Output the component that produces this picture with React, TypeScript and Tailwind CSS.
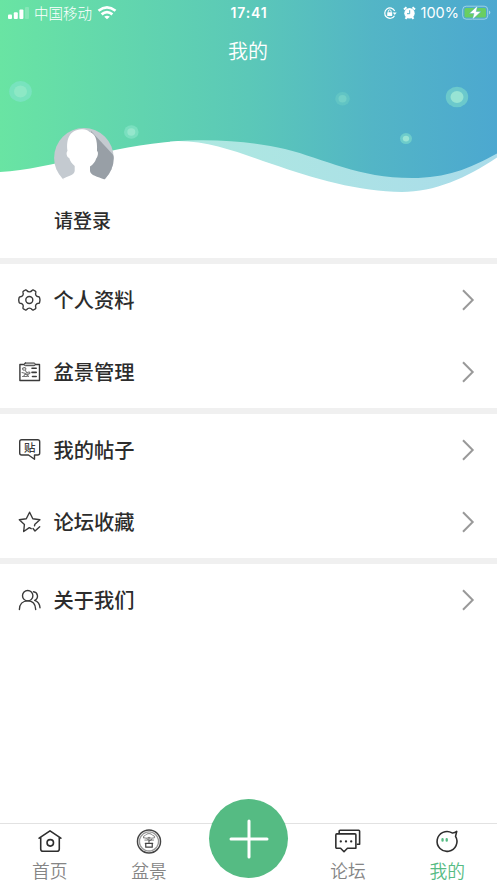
import type { ReactNode } from "react";

const rowIcon = {
  className: "block shrink-0",
  width: 24,
  height: 24,
  viewBox: "0 0 24 24",
  fill: "none",
  stroke: "#3a3a3a",
  strokeWidth: 1.4,
  strokeLinecap: "round" as const,
  strokeLinejoin: "round" as const,
};

const GearIcon = () => (
  <svg {...rowIcon}>
    <path d="M8.400 2Q9.300 1.700 9.800 2.500C11 4.300 13.800 4.300 15 2.500Q15.500 1.700 16.400 2L18.300 3.100Q19.100 3.600 18.800 4.500C17.900 6.700 19.300 8.600 21.500 8.700Q22.500 8.800 22.600 9.700L23 12L22.600 14.300Q22.500 15.200 21.500 15.300C19.300 15.400 17.900 17.300 18.800 19.500Q19.100 20.400 18.300 20.900L16.400 22Q15.500 22.300 15 21.500C13.800 19.700 11 19.700 9.800 21.500Q9.300 22.300 8.400 22L6.500 20.900Q5.700 20.400 6 19.500C6.900 17.300 5.500 15.400 3.300 15.300Q2.300 15.200 2.100 14.300L1.700 12L2.100 9.700Q2.300 8.800 3.300 8.700C5.500 8.600 6.900 6.700 6 4.500Q5.700 3.600 6.500 3.100Z" />
    <circle cx="12.300" cy="12" r="3.500" />
  </svg>
);

const BoardIcon = () => (
  <svg {...rowIcon}>
    <path d="M7 4.500H2.900V20.500H22.500V4.500H18.300" />
    <rect x="7.300" y="3" width="10.800" height="2.700" rx="1" fill="#ccc" strokeWidth="1" />
    <path d="M15 8.200h4.200M15 12.400h4.200M15.500 16.500h3.700" strokeWidth="1.600" />
    <path
      d="M5.500 8.500q2.500-2 3.500 .5q-2 2.500-3.500 0M8 10l2 3q2.500-2 3 0q-2.500 2.500-5 1M5 12.500l3.500 1l-2 3M9 14l2.500 2.500M5.500 16.500h4.500"
      stroke="#777"
      strokeWidth="1.100"
    />
  </svg>
);

const PostIcon = () => (
  <svg {...rowIcon}>
    <path d="M4.700 1.700H20.700Q22.700 1.700 22.700 3.700V15Q22.700 17 20.700 17H17.500V21.300L11.500 17H4.700Q2.700 17 2.700 15V3.700Q2.700 1.700 4.700 1.700Z" />
    <text
      x="12.800"
      y="13.500"
      textAnchor="middle"
      className="fill-[#3a3a3a] stroke-none text-[11.500px] font-medium"
    >
      贴
    </text>
  </svg>
);

const StarIcon = () => (
  <svg {...rowIcon}>
    <path d="M14.200 18.700L12.300 17.600L6.700 21.500L7.400 14.500L2.300 9.700L9.300 8.700L12.600 2.200L15.800 8.700L22.900 9.800L17.900 14.200L17.500 15.700" />
    <path d="M16 18.500L18 21L22.700 16.700" />
  </svg>
);

const PeopleIcon = () => (
  <svg {...rowIcon}>
    <circle cx="10.700" cy="7.700" r="5.200" />
    <path d="M2.400 21.500C2.500 16.500 5.500 12.900 10.700 12.900S18.500 16.500 18.700 21.500" />
    <path d="M16.500 3.800C20.700 4.200 22.300 9.800 17.700 12.300C21 13.500 22.800 16.200 23 19.700" />
  </svg>
);

const tabIcon = {
  className: "block",
  width: 28,
  height: 28,
  viewBox: "0 0 28 28",
  fill: "none",
  stroke: "#2e2e2e",
  strokeWidth: 1.7,
  strokeLinecap: "round" as const,
  strokeLinejoin: "round" as const,
};

const HomeIcon = () => (
  <svg {...tabIcon}>
    <path d="M2.300 11L14 3L25.700 11M4 10V22.500Q4 25 6.500 25H21.500Q24 25 24 22.500V10" />
    <circle cx="14.300" cy="16" r="3.500" />
  </svg>
);

const BonsaiIcon = () => (
  <svg {...tabIcon}>
    <circle cx="14" cy="14.500" r="12.400" stroke="#444" strokeWidth="1.600" />
    <circle cx="14" cy="14.500" r="10.300" stroke="#999" strokeWidth="1.500" strokeDasharray="6 1" />
    <path
      d="M8 10.500q-1-2 2-2.500q1-2 4-2q3 0 4 2q3 .5 2 2.500q-3 1-6 0q-3 1-6 0M9.500 13h3M15.500 13h3.500"
      stroke="#777"
      strokeWidth="1"
    />
    <path d="M14 10v6M14 14l3-1.500M12 11.500l2 2" stroke="#555" strokeWidth="1" />
    <path d="M10 16.500H18M10.500 17V20.700H17.500V17" stroke="#444" strokeWidth="1.300" />
  </svg>
);

const ForumIcon = () => (
  <svg {...tabIcon}>
    <path d="M4.500 6V3.500Q4.500 2.500 5.500 2.500H25.500Q26.500 2.500 26.500 3.500V17.500H24" />
    <path d="M2 6.300H21.500Q22.500 6.300 22.500 7.300V21.800H13.400L9.700 25.600L6 21.800H2Q.9 21.800 .9 20.600V7.500Q.9 6.300 2 6.300Z" />
    <path d="M6.200 14.500h.1M11.800 14.500h.1M17.400 14.500h.1" strokeWidth="2.400" />
  </svg>
);

const MineIcon = () => (
  <svg {...tabIcon}>
    <path d="M19.500 5.300Q22 5.600 24.500 3.700L23.200 9A10.700 10.700 0 1 1 19.500 5.300Z" />
    <path d="M9.200 12v1.600M13.700 12v1.600" stroke="#55bb83" strokeWidth="2.500" />
  </svg>
);

const StatusBar = () => (
  <div className="flex h-[26px] items-center justify-between pl-2 pr-1.5 text-[14.500px] leading-none text-white">
    <div className="flex w-[180px] items-center">
      <svg width="22" height="12" viewBox="0 0 22 12" fill="#fff">
        <rect y="7.500" width="4" height="4.500" rx="1" />
        <rect x="5.800" y="5.200" width="4" height="6.800" rx="1" />
        <rect x="11.400" y="2.500" width="4" height="9.500" rx="1" />
        <rect x="17" y="0" width="4" height="12" rx="1" opacity=".2" />
      </svg>
      <span className="ml-1 font-light">中国移动</span>
      <svg className="ml-[5px]" width="20" height="14" viewBox="0 0 20 14" fill="none" stroke="#fff" strokeWidth="2.700">
        <path d="M1.500 4.800Q10-2 18.500 4.800M4.600 8.400Q10 4 15.400 8.400" />
        <path d="M10 13.300L7.200 10.700Q10 8.700 12.800 10.700Z" fill="#fff" stroke="none" />
      </svg>
    </div>
    <span className="mr-px font-[Inter] text-[14px] font-semibold tracking-[.8px]">17:41</span>
    <div className="flex w-[180px] items-center justify-end">
      <svg width="14" height="14" viewBox="0 0 14 14" fill="none" stroke="#fff" strokeWidth="1.200">
        <path d="M11.500 9.700A5.200 5.200 0 1 1 11.700 5" />
        <path d="M9.700 6.500h4L11.700 9Z" fill="#fff" stroke="none" />
        <rect x="4.200" y="6.300" width="5" height="3.700" rx=".5" fill="#fff" stroke="none" />
        <path d="M5.300 6.500V5.300a1.400 1.400 0 0 1 2.800 0v1.200" strokeWidth="1" />
      </svg>
      <svg className="ml-[6px]" width="13" height="14" viewBox="0 0 13 14">
        <circle cx="6.500" cy="7.300" r="5.200" fill="#fff" />
        <path d="M1 3.500L3.500 1.300M12 3.500L9.500 1.300M2.500 12.800L4 11M10.500 12.800L9 11" stroke="#fff" strokeWidth="2" />
        <path d="M6.700 4.200V7.700H4" stroke="#52b1c8" fill="none" />
      </svg>
      <span className="ml-[5px] font-[Inter] text-[14.500px]">100%</span>
      <svg className="ml-[3px]" width="29" height="16" viewBox="0 0 29 16">
        <rect x=".7" y="1.200" width="25" height="13" rx="3.500" fill="none" stroke="#fff" strokeOpacity=".45" />
        <rect x="2.500" y="3" width="21.500" height="9.500" rx="1.500" fill="#69ce62" />
        <path d="M27 5.500v4Q28.300 9 28.300 7.500T27 5.500" fill="#fff" opacity=".5" />
        <path d="M15.700 .5L7.300 8.500H12L10.300 14.800L19 6.500H14.200Z" fill="#fff" stroke="#52b1c8" strokeWidth=".5" />
      </svg>
    </div>
  </div>
);

const bubbles = [
  { x: 20.5, y: 91.5, r: 11.3, inner: 6.5, outerColor: "#78e3be", innerColor: "#8de8c5" },
  { x: 131.3, y: 132, r: 7.3, inner: 4, outerColor: "#7adfbf", innerColor: "#95e7cc" },
  { x: 342.5, y: 98.7, r: 7.3, inner: 4, outerColor: "#61c4c4", innerColor: "#73d0c8" },
  { x: 457, y: 97, r: 11.2, inner: 6.5, outerColor: "#6bc9cc", innerColor: "#97e4d4" },
  { x: 406, y: 138.6, r: 6, inner: 3.2, outerColor: "#6dcccb", innerColor: "#9ae4d5" },
];

const Waves = () => (
  <svg className="absolute inset-0" width="497" height="200" viewBox="0 0 497 200">
    <defs>
      <linearGradient id="sky">
        <stop offset="0" stopColor="#69e4a3" />
        <stop offset=".5" stopColor="#5bc8b8" />
        <stop offset=".75" stopColor="#53b5c6" />
        <stop offset="1" stopColor="#4ca8d0" />
      </linearGradient>
      <linearGradient id="backWave">
        <stop offset="0" stopColor="#aee9e0" />
        <stop offset="1" stopColor="#aadcea" />
      </linearGradient>
    </defs>
    <rect width="497" height="200" fill="url(#sky)" />
    {/* pale back wave, then the white front one */}
    <path
      d="M170 141.500C215 138 256 142 285 149C325 159 358 178 412 178C446 178 469 169 497 153.500V200H170Z"
      fill="url(#backWave)"
    />
    <path
      d="M0 172C54 169 107 146 178 141C212 141 242 154 272 164C312 178 360 192 402 192C434 192 467 178 497 157.500V200H0Z"
      fill="#fff"
    />
    {bubbles.map((b) => (
      <g key={b.x}>
        <ellipse cx={b.x} cy={b.y} rx={b.r} ry={b.r * 0.92} fill={b.outerColor} />
        <ellipse cx={b.x} cy={b.y} rx={b.inner} ry={b.inner * 0.92} fill={b.innerColor} />
      </g>
    ))}
  </svg>
);

const Avatar = () => (
  <svg className="block" width="60" height="60" viewBox="0 0 60 60">
    <defs>
      <clipPath id="face">
        <circle cx="29.900" cy="29.900" r="29.800" />
      </clipPath>
    </defs>
    <g clipPath="url(#face)">
      <rect width="60" height="51.500" fill="#c4cad0" />
      <path d="M37 3L65 33V51.500H35V40Z" fill="#989fa6" />
      <path
        d="M27.500 1.200C31.500 1 33.500 2 35.500 4C41 5.500 43.500 11 43 23C44.700 23.500 44 29 42.200 30.500C41.200 34 39 36.500 36 38.500V43C36.500 47.500 43.500 48.500 50.500 51.500L60 60H0L8.500 51C14 48 20 47.500 20.700 43V38C18.200 36 16 33 15.200 30C12.300 29 12 24 13.500 23C12 11 15.500 2 27.500 1.200Z"
        fill="#fff"
      />
    </g>
  </svg>
);

const groups: { label: string; icon: ReactNode }[][] = [
  [
    { label: "个人资料", icon: <GearIcon /> },
    { label: "盆景管理", icon: <BoardIcon /> },
  ],
  [
    { label: "我的帖子", icon: <PostIcon /> },
    { label: "论坛收藏", icon: <StarIcon /> },
  ],
  [{ label: "关于我们", icon: <PeopleIcon /> }],
];

const Tab = ({ label, icon, active }: { label: string; icon: ReactNode; active?: boolean }) => (
  <button className="flex flex-1 flex-col items-center pt-1">
    {icon}
    <span
      className={
        active
          ? "mt-[3px] text-[17.750px] leading-[26px] font-[350] text-[#55bb83]"
          : "mt-[3px] text-[17.750px] leading-[26px] font-[350] text-[#858585]"
      }
    >
      {label}
    </span>
  </button>
);

export default function App() {
  return (
    <main className="flex h-[883px] w-[497px] flex-col overflow-hidden bg-white font-['Noto_Sans_CJK_SC',sans-serif] text-[#2c2c2c]">
      {/* HEADER */}
      <header className="relative h-[258px] shrink-0">
        <Waves />
        <div className="relative">
          <StatusBar />
          <h1 className="mt-[10px] pr-px text-center text-[20px] leading-[30px] font-[350] text-white">我的</h1>
          <div className="mt-[62px] ml-[54px]">
            <Avatar />
            <p className="mt-[18px] text-[19px] leading-[28px] font-medium">请登录</p>
          </div>
        </div>
      </header>

      {/* MENU */}
      <section className="flex-1">
        {groups.map((rows) => (
          <div key={rows[0].label} className="border-t-6 border-[#f0f0f0]">
            {rows.map((row) => (
              <button key={row.label} className="flex h-[72px] w-full items-center pr-[22px] pl-[17px]">
                {row.icon}
                <span className="ml-[12.500px] text-[20.250px] leading-[30px] font-medium">{row.label}</span>
                <svg className="ml-auto" width="14" height="22" viewBox="0 0 14 22" fill="none" stroke="#999" strokeWidth="2">
                  <path d="M2 1.200L11.700 11L2 20.800" />
                </svg>
              </button>
            ))}
          </div>
        ))}
      </section>

      {/* TAB BAR */}
      <nav className="flex h-[60px] shrink-0 border-t border-[#e2e2e2]">
        <Tab label="首页" icon={<HomeIcon />} />
        <Tab label="盆景" icon={<BonsaiIcon />} />
        <div className="flex flex-1 justify-center">
          <button className="-mt-[25px] flex size-[79px] shrink-0 items-center justify-center rounded-full bg-[#55bb83]">
            <svg width="40" height="40" viewBox="0 0 40 40" stroke="#fff" strokeWidth="3" strokeLinecap="round">
              <path d="M2 20H38M20 2V38" />
            </svg>
          </button>
        </div>
        <Tab label="论坛" icon={<ForumIcon />} />
        <Tab label="我的" icon={<MineIcon />} active />
      </nav>
    </main>
  );
}
